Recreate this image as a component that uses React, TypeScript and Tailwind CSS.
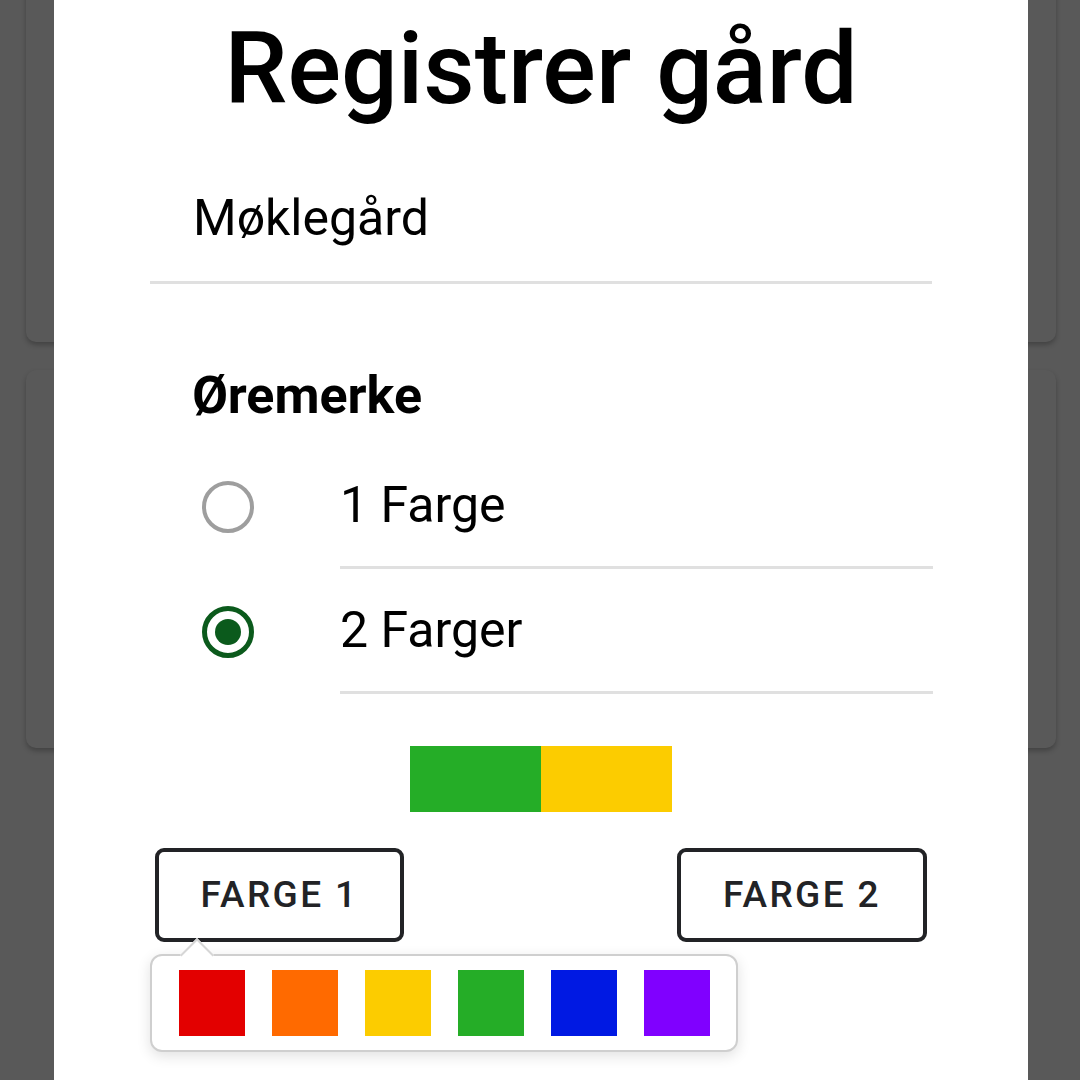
import { useState } from 'react';

const swatches = ['#e30000', '#ff6a00', '#fccc00', '#25ad27', '#0019e3', '#8000ff'];

const options = [
  { id: 1, label: '1 Farge' },
  { id: 2, label: '2 Farger' },
];

const App = () => {
  const [count, setCount] = useState(2);
  const [colors, setColors] = useState(['#25ad27', '#fccc00']);

  return (
    <div className="relative w-[1080px] h-[1080px] overflow-hidden bg-[#595959]" style={{ fontFamily: 'Roboto, "Noto Sans", sans-serif' }}>
      {/* dimmed list behind the dialog */}
      <div className="flex flex-col gap-[28px] px-[26px] pr-[24px] -mt-[20px]">
        <div className="h-[362px] rounded-[10px] bg-[#595959] shadow-[0_3px_5px_rgba(0,0,0,0.25)]" />
        <div className="h-[378px] rounded-[10px] bg-[#595959] shadow-[0_3px_5px_rgba(0,0,0,0.25)]" />
      </div>

      {/* dialog */}
      <div className="absolute left-[54px] top-0 w-[974px] h-[1080px] bg-white flex flex-col">
        <h1 className="mt-[19px] text-center text-[100px] leading-none font-medium text-black">Registrer gård</h1>

        <div className="mx-[96px] mt-[74px] border-b-[3px] border-[#e0e0e0] pb-[38px] pl-[43px]">
          <div className="text-[50px] leading-none text-black">Møklegård</div>
        </div>

        <div className="mt-[86px] pl-[138px] text-[52px] leading-none font-bold text-black">Øremerke</div>

        <div className="mt-[22px] flex flex-col">
          {options.map((opt) => (
            <div key={opt.id} className="flex items-stretch cursor-pointer" onClick={() => setCount(opt.id)}>
              <div className="w-[286px] flex items-center justify-end pr-[86px]">
                <div
                  className={
                    count === opt.id
                      ? 'w-[52px] h-[52px] rounded-full border-[5px] border-[#0b5a1c] flex items-center justify-center'
                      : 'w-[52px] h-[52px] rounded-full border-[4px] border-[#9e9e9e]'
                  }
                >
                  {count === opt.id && <div className="w-[26px] h-[26px] rounded-full bg-[#0b5a1c]" />}
                </div>
              </div>
              <div className="flex-1 mr-[95px] h-[125px] flex items-center border-b-[3px] border-[#e0e0e0] text-[50px] leading-none text-black">
                {opt.label}
              </div>
            </div>
          ))}
        </div>

        <div className="mt-[52px] flex justify-center">
          <div className="w-[131px] h-[66px]" style={{ backgroundColor: colors[0] }} />
          {count === 2 && <div className="w-[131px] h-[66px]" style={{ backgroundColor: colors[1] }} />}
        </div>

        <div className="relative mt-[36px] flex justify-between px-[101px]">
          <button className="w-[249px] h-[94px] rounded-[9px] border-[4px] border-[#222326] bg-white text-[37px] font-medium tracking-[2.4px] text-[#222326]">
            FARGE 1
          </button>
          <button className="w-[250px] h-[94px] rounded-[9px] border-[4px] border-[#222326] bg-white text-[37px] font-medium tracking-[2.4px] text-[#222326]">
            FARGE 2
          </button>

          {/* colour picker popover */}
          <div className="absolute left-[96px] top-[106px] rounded-[12px] border-2 border-[#cfcfcf] bg-white shadow-[0_4px_14px_rgba(0,0,0,0.12)] pl-[27px] pr-[26px] py-[14px]">
            <div className="absolute -top-[13px] left-[33px] w-[24px] h-[24px] rotate-45 bg-white border-l-2 border-t-2 border-[#d6d6d6]" />
            <div className="relative flex gap-[27px]">
              {swatches.map((c) => (
                <div
                  key={c}
                  className="w-[66px] h-[66px] cursor-pointer"
                  style={{ backgroundColor: c }}
                  onClick={() => setColors((prev) => [c, prev[1]])}
                />
              ))}
            </div>
          </div>
        </div>
      </div>
    </div>
  );
};

export default App;
